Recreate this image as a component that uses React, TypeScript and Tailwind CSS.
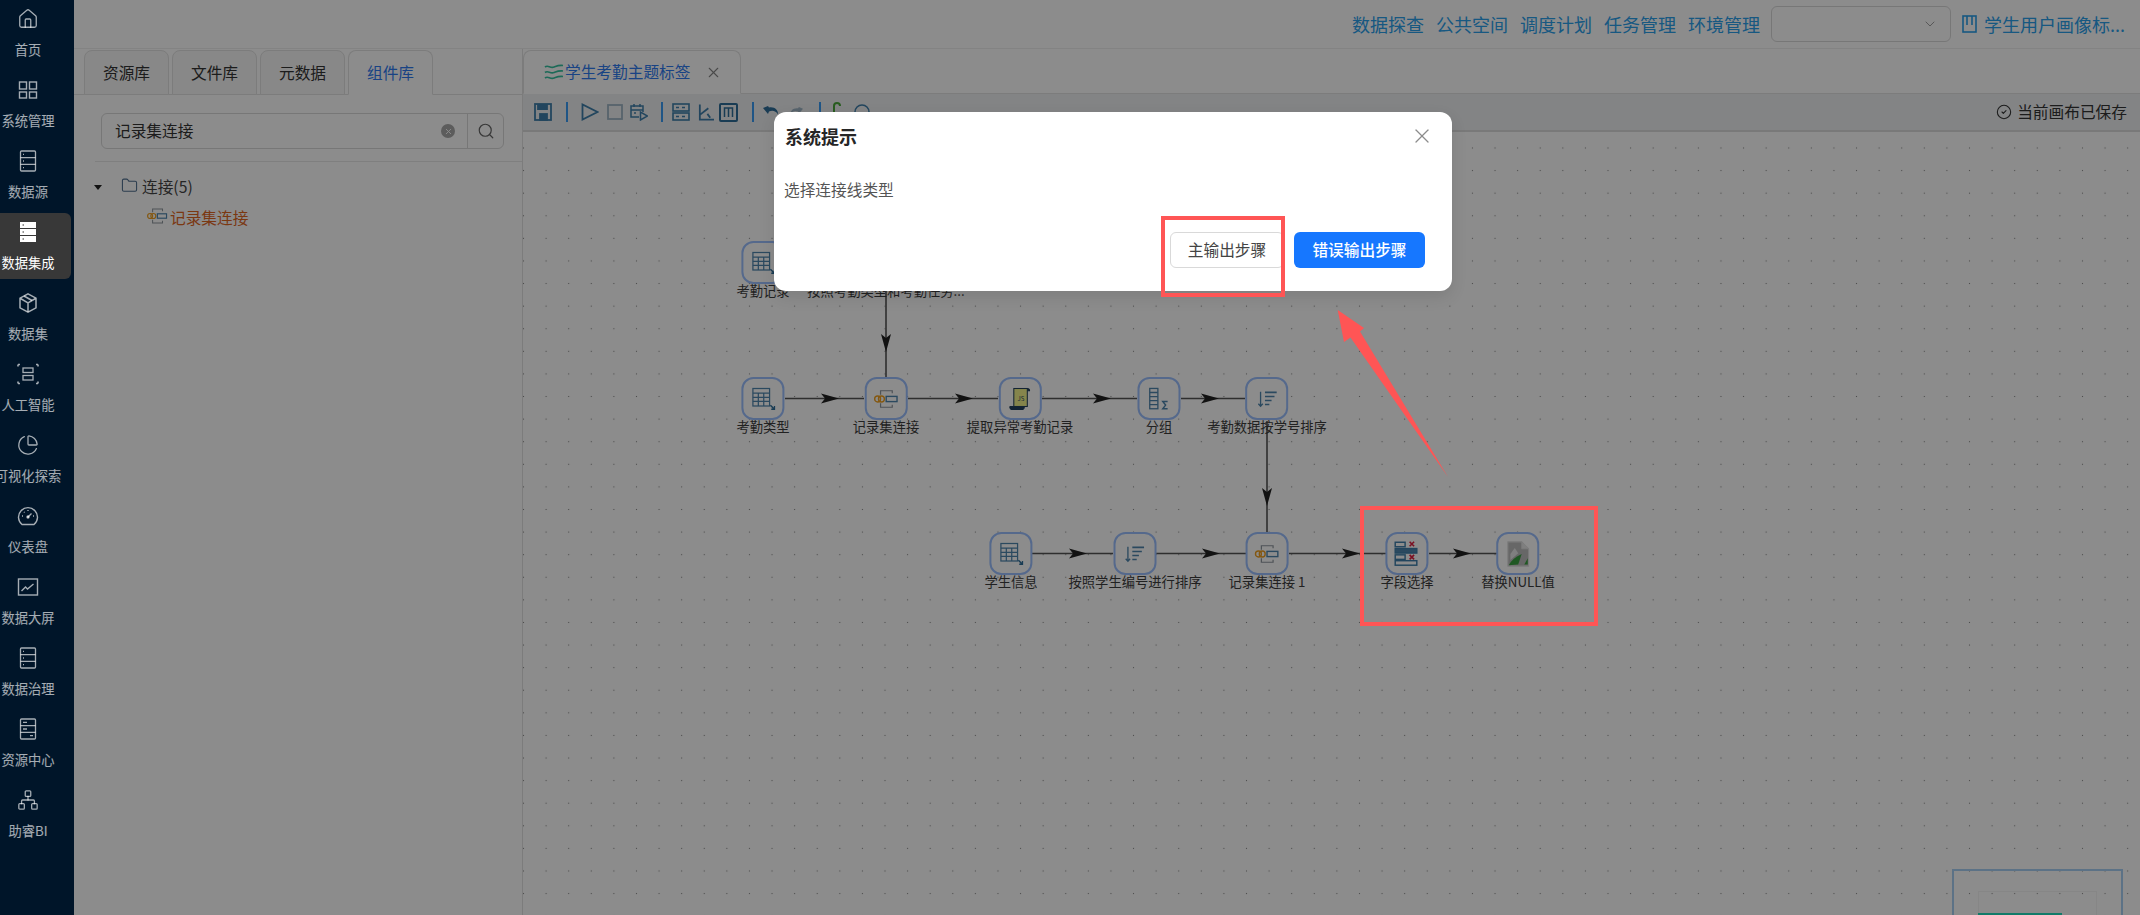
import { ChartPie, ChevronDown, CircleCheck, Folder, House, Network, Search, X } from "lucide-react";
import type { ReactNode } from "react";

const font = "font-['Noto_Sans_CJK_SC','Liberation_Sans',sans-serif]";

function ServerOutline({ thick }: { thick?: boolean }) {
  return (
    <svg width="22" height="22" viewBox="0 0 22 22" fill="none" stroke="currentColor" strokeWidth="1.3">
      <rect x="3.5" y="1" width="15" height="20" rx="1" />
      <path d="M3.5 7.6h15M3.5 14.3h15" />
      {thick ? (
        <path d="M6 4.3h4M6 11h4M13 17.6h3" />
      ) : (
        <path d="M6 4.3h1M6 11h1M6 17.6h1" />
      )}
    </svg>
  );
}

function GridIcon() {
  return (
    <svg width="22" height="22" viewBox="0 0 22 22" fill="none" stroke="currentColor" strokeWidth="1.4">
      <rect x="2.5" y="3" width="7" height="7" />
      <rect x="12.5" y="3" width="7" height="7" />
      <rect x="2.5" y="13" width="7" height="6" />
      <rect x="12.5" y="13" width="7" height="6" />
    </svg>
  );
}

function ServerSolid() {
  return (
    <svg width="22" height="22" viewBox="0 0 22 22">
      <rect x="3" y="1" width="16" height="6" fill="#fff" />
      <rect x="3" y="8" width="16" height="6" fill="#fff" />
      <rect x="3" y="15" width="16" height="6" fill="#fff" />
      <path d="M5.500 4h1.500M5.500 11h1.500M5.500 18h1.500" stroke="#333" strokeWidth="1.2" />
    </svg>
  );
}

function CubeIcon() {
  return (
    <svg width="22" height="22" viewBox="0 0 22 22" fill="none" stroke="currentColor" strokeWidth="1.5">
      <path d="M11 1.800l8 4.400v9.600l-8 4.400-8-4.400V6.200z" />
      <path d="M3.500 6.500l7.500 4.300 7.500-4.300M11 10.800v9" />
      <path d="M7 4l8 4.500" />
    </svg>
  );
}

function ScanIcon() {
  return (
    <svg width="22" height="22" viewBox="0 0 22 22" fill="none" stroke="currentColor" strokeWidth="1.3">
      <rect x="6" y="5" width="10" height="4.500" />
      <rect x="6" y="12.500" width="10" height="4.500" />
      <path d="M1 1.500h2M1 1.500v2M21 1.500h-2M21 1.500v2M1 20.500h2M1 20.500v-2M21 20.500h-2M21 20.500v-2" strokeWidth="1.6" />
    </svg>
  );
}

function GaugeIcon() {
  return (
    <svg width="22" height="22" viewBox="0 0 22 22" fill="none" stroke="currentColor" strokeWidth="1.4">
      <path d="M5 19.500a9.500 9.500 0 1 1 12 0z" />
      <path d="M11 12l3.500-3.500M5 11h1M16 11h1M11 5v1M7 7l.6.6" />
      <circle cx="11" cy="12" r="1" fill="currentColor" />
    </svg>
  );
}

function ScreenIcon() {
  return (
    <svg width="22" height="22" viewBox="0 0 22 22" fill="none" stroke="currentColor" strokeWidth="1.4">
      <rect x="1.500" y="3" width="19" height="16" />
      <path d="M4.500 15l4-4 2 2 6-5" />
    </svg>
  );
}

const navItems: { label: string; icon: ReactNode; active?: boolean }[] = [
  { label: "首页", icon: <House size={22} strokeWidth={1.4} /> },
  { label: "系统管理", icon: <GridIcon /> },
  { label: "数据源", icon: <ServerOutline /> },
  { label: "数据集成", icon: <ServerSolid />, active: true },
  { label: "数据集", icon: <CubeIcon /> },
  { label: "人工智能", icon: <ScanIcon /> },
  { label: "可视化探索", icon: <ChartPie size={22} strokeWidth={1.4} /> },
  { label: "仪表盘", icon: <GaugeIcon /> },
  { label: "数据大屏", icon: <ScreenIcon /> },
  { label: "数据治理", icon: <ServerOutline /> },
  { label: "资源中心", icon: <ServerOutline thick /> },
  { label: "助睿BI", icon: <Network size={22} strokeWidth={1.4} /> },
];

function Sidebar() {
  return (
    <nav className="relative z-30 flex h-full w-[74px] shrink-0 flex-col overflow-hidden bg-[#001529]">
      {navItems.map((item) => (
        <div className="h-[71px] w-[71px] shrink-0" key={item.label}>
          <div
            className={`flex h-[66px] w-[71px] flex-col rounded-r-md pt-[8px] ${
              item.active ? "bg-[#383838] text-white" : "text-white/65"
            }`}
          >
            <div className="flex h-[22px] w-[56px] justify-center">{item.icon}</div>
            <div className="mt-[10px] flex w-[56px] justify-center whitespace-nowrap text-[13.3px] leading-[20px]">
              {item.label}
            </div>
          </div>
        </div>
      ))}
    </nav>
  );
}

const headerLinks = ["数据探查", "公共空间", "调度计划", "任务管理", "环境管理"];

function Header() {
  return (
    <header className="flex h-[49px] shrink-0 items-center justify-end border-b border-[#eeeeee] pr-[15px] text-[18px] text-[#2aa0ec]">
      <div className="flex gap-[12px]">
        {headerLinks.map((link) => (
          <span key={link}>{link}</span>
        ))}
      </div>
      <div className="ml-[11px] flex h-[36px] w-[180px] items-center justify-end rounded-md border border-[#d9d9d9] pr-[12px] text-[#a0a0a0]">
        <ChevronDown size={16} strokeWidth={1.5} />
      </div>
      <svg className="ml-[11px]" width="15" height="18" viewBox="0 0 15 18" fill="none" stroke="currentColor" strokeWidth="1.6">
        <rect x="1" y="1" width="13" height="16" />
        <path d="M5 1v9M10 1v9" />
      </svg>
      <span className="ml-[7px] whitespace-nowrap">学生用户画像标...</span>
    </header>
  );
}

const libTabs = ["资源库", "文件库", "元数据", "组件库"];

function JoinIcon({ size = 26 }: { size?: number }) {
  return (
    <svg width={size} height={size} viewBox="0 0 30 30" fill="none">
      <path d="M9 10V5.500h13.500v3M9 20v4.500h13.500v-3" stroke="#8f979e" strokeWidth="1.4" />
      <circle cx="5.600" cy="15" r="3.400" stroke="#f0a020" strokeWidth="1.6" />
      <circle cx="10" cy="15" r="3.400" stroke="#f0a020" strokeWidth="1.6" />
      <rect x="15.500" y="12" width="12.500" height="6" stroke="#4f86ae" strokeWidth="1.6" />
    </svg>
  );
}

function LibraryPanel() {
  return (
    <aside className="flex h-full w-[449px] shrink-0 flex-col border-r border-[#e2e2e2]">
      <div className="flex h-[46px] shrink-0 items-end gap-[3px] border-b border-[#e2e2e2] pl-[10px] pt-px">
        {libTabs.map((tab, i) => (
          <div
            className={`-mb-px flex h-[45px] w-[85px] items-center justify-center rounded-t-lg border border-[#e2e2e2] text-[15.7px] ${
              i === 3 ? "border-b-white bg-white text-[#2f7bf0]" : "bg-[#f7f7f7] text-[#333]"
            }`}
            key={tab}
          >
            {tab}
          </div>
        ))}
      </div>
      <div className="ml-[27px] mt-[18px] flex h-[36px] w-[403px] items-center rounded-md border border-[#d9d9d9]">
        <span className="ml-[13px] flex-1 text-[15.7px] text-[#333]">记录集连接</span>
        <span className="mr-[12px] flex size-[14px] items-center justify-center rounded-full bg-[#a8a8a8] text-white">
          <X size={9} strokeWidth={2.5} />
        </span>
        <span className="flex h-full w-[36px] items-center justify-center border-l border-[#d9d9d9] text-[#666]">
          <Search size={18} strokeWidth={1.6} />
        </span>
      </div>
      <div className="ml-[21px] mt-[12px] border-t border-[#e8e8e8]" />
      <div className="mt-[13px] flex h-[24px] items-center text-[15.7px] text-[#444]">
        <span className="ml-[20px] h-0 w-0 border-x-[4.5px] border-t-[5px] border-x-transparent border-t-[#222]" />
        <Folder className="ml-[19px] -translate-y-[2px]" size={17} strokeWidth={1.5} color="#4f6f8f" />
        <span className="ml-[4px]">连接(5)</span>
      </div>
      <div className="mt-[7px] flex h-[24px] items-center">
        <span className="ml-[72px] flex -translate-y-[2px]">
          <JoinIcon size={22} />
        </span>
        <span className="ml-[2px] text-[15.7px] text-[#e0661f]">记录集连接</span>
      </div>
    </aside>
  );
}

function TableIcon() {
  return (
    <svg width="25" height="25" viewBox="0 0 30 30" fill="none" stroke="#4f86ae" strokeWidth="1.5">
      <rect x="3" y="3" width="20" height="21" />
      <path d="M3 8.500h20M3 13.500h20M3 18.500h20M9.500 8.500v15.500M16 8.500v15.500" />
      <path d="M24 23l4.500 4.500M29 24v4h-4" stroke="#2f6d99" strokeWidth="1.8" />
    </svg>
  );
}

function SortIcon() {
  return (
    <svg width="22" height="22" viewBox="0 0 30 30" fill="none" stroke="#4f86ae" strokeWidth="1.8">
      <path d="M6 5v20M3 21.500l3 3.500 3-3.500" />
      <path d="M12 6h16M12 11.500h13M12 17h9M12 22.500h6" strokeWidth="2.200" />
    </svg>
  );
}

function ScriptIcon() {
  return (
    <svg width="24" height="26" viewBox="0 0 32 34" fill="none" stroke="#23415e" strokeWidth="1.4">
      <path d="M8 27H3a3 3 0 0 0 2 4h15a4 4 0 0 0 2-4z" fill="#23415e" />
      <path d="M26 3a3 3 0 0 1 3 3h-3z" fill="#23415e" />
      <rect x="8" y="3" width="18" height="24" fill="#f2f28a" />
      <text x="13" y="19" fontSize="8" fill="#23415e" stroke="none">JS</text>
    </svg>
  );
}

function GroupIcon() {
  return (
    <svg width="26" height="26" viewBox="0 0 32 32" fill="none" stroke="#4f86ae" strokeWidth="1.6">
      <rect x="4" y="3" width="10" height="25" />
      <path d="M4 8h10M4 13h10M4 18h10M4 23h10" />
      <path d="M26 19h-6l3.500 4.500L20 28h6" strokeWidth="1.8" />
    </svg>
  );
}

function FieldIcon() {
  return (
    <svg width="27" height="27" viewBox="0 0 30 30" fill="none" stroke="#3f7fab" strokeWidth="1.6">
      <rect x="2" y="2.500" width="11" height="5" />
      <rect x="2" y="9.500" width="24" height="5" fill="#4f86ae" />
      <rect x="2" y="16.500" width="11" height="5" />
      <rect x="2" y="23" width="24" height="5" />
      <path d="M18 2l5 5M23 2l-5 5M18 16.500l5 5M23 16.500l-5 5" stroke="#e02040" strokeWidth="1.8" />
    </svg>
  );
}

function BrokenImageIcon() {
  return (
    <svg width="26" height="28" viewBox="0 0 30 32" fill="none">
      <path d="M3 2h16l8 8v20H3z" fill="#bcbcbc" stroke="#e0e0e0" strokeWidth="1.2" />
      <path d="M19 2v8h8" fill="#e8e8e8" stroke="#e0e0e0" />
      <path d="M6 16l5-7 4 6-9 8z" fill="#e8e8e8" />
      <path d="M4 29c3-6 8-10 15-13l-4 12z" fill="#3aa040" />
      <path d="M22 28l4-7v7z" fill="#3aa040" />
    </svg>
  );
}

const nodes: { cx: number; cy: number; label: string; icon: ReactNode }[] = [
  { cx: 763, cy: 261, label: "考勤记录", icon: <TableIcon /> },
  { cx: 886, cy: 261, label: "按照考勤类型和考勤任务...", icon: <SortIcon /> },
  { cx: 763, cy: 397.5, label: "考勤类型", icon: <TableIcon /> },
  { cx: 886, cy: 397.5, label: "记录集连接", icon: <JoinIcon /> },
  { cx: 1020, cy: 397.5, label: "提取异常考勤记录", icon: <ScriptIcon /> },
  { cx: 1159, cy: 397.5, label: "分组", icon: <GroupIcon /> },
  { cx: 1267, cy: 397.5, label: "考勤数据按学号排序", icon: <SortIcon /> },
  { cx: 1011, cy: 552.5, label: "学生信息", icon: <TableIcon /> },
  { cx: 1135, cy: 552.5, label: "按照学生编号进行排序", icon: <SortIcon /> },
  { cx: 1267, cy: 552.5, label: "记录集连接 1", icon: <JoinIcon /> },
  { cx: 1407, cy: 552.5, label: "字段选择", icon: <FieldIcon /> },
  { cx: 1518, cy: 552.5, label: "替换NULL值", icon: <BrokenImageIcon /> },
];

// x1, x2, y and where the arrow head starts, in page pixels
const hEdges = [
  [785, 864, 397.5, 821],
  [908, 998, 397.5, 955],
  [1042, 1137, 397.5, 1093],
  [1181, 1245, 397.5, 1201],
  [1032, 1113, 552.5, 1069],
  [1156, 1246, 552.5, 1202],
  [1289, 1386, 552.5, 1342],
  [1429, 1497, 552.5, 1453],
];
const vEdges = [
  [886, 283, 377, 333],
  [1267, 420, 531, 487],
];

function Edges() {
  return (
    <svg className="absolute inset-0" width="1617" height="784" viewBox="523 131 1617 784" fill="none">
      {hEdges.map(([x1, x2, y, a]) => (
        <g key={`${x1}-${y}`}>
          <path d={`M${x1} ${y}H${x2}`} stroke="#555" strokeWidth="1.6" />
          <path d={`M${a} ${y - 5}L${a + 18} ${y}L${a} ${y + 5}L${a + 4} ${y}z`} fill="#222" />
        </g>
      ))}
      {vEdges.map(([x, y1, y2, a]) => (
        <g key={`${x}-${y1}`}>
          <path d={`M${x} ${y1}V${y2}`} stroke="#555" strokeWidth="1.6" />
          <path d={`M${x - 5} ${a}L${x} ${a + 18}L${x + 5} ${a}L${x} ${a + 4}z`} fill="#222" />
        </g>
      ))}
    </svg>
  );
}

function Canvas() {
  return (
    <div className="relative flex-1 overflow-hidden bg-[radial-gradient(circle,#8a8a8a_0.6px,transparent_1px)] bg-size-[22.6px_22.6px] bg-position-[-10.8px_4.7px]">
      <Edges />
      {nodes.map((node) => (
        <div
          className="absolute flex -translate-x-1/2 flex-col items-center"
          key={`${node.label}-${node.cx}`}
          style={{ left: node.cx - 523, top: node.cy - 131 - 21.5 }}
        >
          <div className="flex size-[43px] items-center justify-center rounded-xl border-2 border-[#9cc0ff] bg-white">
            {node.icon}
          </div>
          <span className="-mt-[2px] whitespace-nowrap text-[13.3px] leading-[17px] text-[#3d3d3d]">{node.label}</span>
        </div>
      ))}
      <div className="absolute left-[1429px] top-[737px] h-[60px] w-[171px] border-2 border-[#a8d0f5]">
        <div className="ml-[24px] mt-[20px] h-[40px] w-[119px] border border-[#f4f4f4]">
          <div className="ml-[-1px] mt-[21px] h-[20px] w-[84px] border-2 border-[#23e0c0]" />
        </div>
      </div>
    </div>
  );
}

function ToolbarSep({ className }: { className: string }) {
  return <span className={`h-[20px] w-[2px] bg-[#3a9cf5] ${className}`} />;
}

function Toolbar() {
  return (
    <div className="flex h-[38px] shrink-0 items-center border-b-2 border-[#dddddd] bg-[#eef0f2] pl-[11px] pr-[13px]">
      <svg width="18" height="18" viewBox="0 0 18 18" fill="none" stroke="#3f7fab" strokeWidth="1.8">
        <rect x="1" y="1" width="16" height="16" />
        <path d="M4 1v5h9V1" fill="#3f7fab" />
        <rect x="6" y="11" width="7" height="6" fill="#3f7fab" />
      </svg>
      <ToolbarSep className="ml-[14px] mr-[13px]" />
      <svg width="18" height="18" viewBox="0 0 18 18" fill="none" stroke="#3f7fab" strokeWidth="1.8">
        <path d="M1.500 1.500v15l15-7.500z" />
      </svg>
      <svg className="ml-[8px]" width="16" height="16" viewBox="0 0 16 16" fill="none" stroke="#9fb5c5" strokeWidth="1.8">
        <rect x="1" y="1" width="14" height="14" />
      </svg>
      <svg className="ml-[7px]" width="18" height="18" viewBox="0 0 18 18" fill="none" stroke="#3f7fab" strokeWidth="1.5">
        <path d="M9 14H1V3h12v6M1 7h12M4 1v3M10 1v3M4 10h2" />
        <path d="M10.500 9v8l7-4z" />
      </svg>
      <ToolbarSep className="ml-[13px] mr-[9px]" />
      <svg width="18" height="18" viewBox="0 0 18 18" fill="none" stroke="#3f7fab" strokeWidth="1.6">
        <rect x="1" y="1" width="16" height="7" />
        <rect x="1" y="10" width="16" height="7" />
        <path d="M4 4.500h3M10 4.500h3M4 13.500h3M10 13.500h3" />
      </svg>
      <svg className="ml-[7px]" width="17" height="18" viewBox="0 0 18 18" fill="none" stroke="#3f7fab" strokeWidth="1.9">
        <path d="M3 1v16h15M3 12l9-7M11 11l3 4" />
      </svg>
      <svg className="ml-[5px]" width="19" height="19" viewBox="0 0 19 19" fill="none" stroke="#2f6d99" strokeWidth="2">
        <rect x="1" y="1" width="17" height="17" rx="1" />
        <path d="M5.500 14V5h8v9M9.500 5v9" strokeWidth="1.5" />
      </svg>
      <ToolbarSep className="ml-[14px] mr-[9px]" />
      <svg width="17" height="14" viewBox="0 0 17 14" fill="#2f6d99">
        <path d="M0 3l5 6 1-2.500c3-1.500 7-1 9 3 .3-4-3-8-9-7L5 1z" />
      </svg>
      <svg className="ml-[9px]" width="14" height="14" viewBox="0 0 17 14" fill="#9fb5c5">
        <path d="M17 3l-5 6-1-2.500c-3-1.500-7-1-9 3-.3-4 3-8 9-7L12 1z" />
      </svg>
      <ToolbarSep className="ml-[16px] mr-[11px]" />
      <svg width="9" height="20" viewBox="0 0 9 20" fill="none" stroke="#4aa83a" strokeWidth="2">
        <path d="M8 4a3 3 0 0 0-6 0v12" />
      </svg>
      <svg className="ml-[13px]" width="16" height="16" viewBox="0 0 16 16" fill="none" stroke="#3f7fab" strokeWidth="1.5">
        <circle cx="8" cy="8" r="7" />
      </svg>
      <div className="ml-auto flex items-center gap-[5px] text-[15.7px] text-[#333]">
        <CircleCheck size={16} strokeWidth={1.6} />
        当前画布已保存
      </div>
    </div>
  );
}

function Editor() {
  return (
    <section className="flex min-w-0 flex-1 flex-col">
      <div className="flex h-[45px] shrink-0 items-end border-b border-[#e2e2e2] pt-px">
        <div className="-mb-px flex h-[44px] w-[218px] items-center rounded-t-lg border border-[#e2e2e2] border-b-white bg-white pl-[20px]">
          <svg width="20" height="17" viewBox="0 0 20 17" fill="none" stroke="#35c2a0" strokeWidth="1.7">
            <path d="M1 3c3-2.500 5 1.500 9 0s5-2 9-1.500M1 8.500c3-2.500 5 1.500 9 0s5-2 9-1.500M1 14c3-2.500 5 1.500 9 0s5-2 9-1.500" />
          </svg>
          <span className="ml-[1px] whitespace-nowrap text-[15.7px] text-[#2f7bf0]">学生考勤主题标签</span>
          <X className="ml-[14px]" size={17} strokeWidth={1.5} color="#888" />
        </div>
      </div>
      <Toolbar />
      <Canvas />
    </section>
  );
}

function Dialog() {
  return (
    <div className="absolute left-[774px] top-[112px] z-20 flex h-[179px] w-[678px] flex-col rounded-xl bg-white pt-[11px] shadow-[0_6px_16px_rgba(0,0,0,0.1)]">
      <div className="flex h-[26px] items-center justify-between pl-[11px] pr-[18px]">
        <span className="text-[18px] font-bold text-[#262626]">系统提示</span>
        <X size={24} strokeWidth={1.3} color="#8c8c8c" />
      </div>
      <p className="ml-[10px] mt-[29px] h-[24px] text-[15.7px] leading-[24px] text-[#555]">选择连接线类型</p>
      <div className="mt-[30px] flex justify-end gap-[10px] pr-[27px]">
        <button className="h-[36px] w-[114px] rounded-md border border-[#d9d9d9] bg-white text-[15.7px] text-[#444]" type="button">
          主输出步骤
        </button>
        <button className="h-[36px] w-[131px] rounded-md bg-[#1677ff] text-[15.7px] font-medium text-white" type="button">
          错误输出步骤
        </button>
      </div>
    </div>
  );
}

export default function App() {
  return (
    <div className={`relative flex h-[915px] w-[2140px] overflow-hidden bg-white ${font}`}>
      <Sidebar />
      <main className="flex min-w-0 flex-1 flex-col">
        <Header />
        <div className="flex min-h-0 flex-1">
          <LibraryPanel />
          <Editor />
        </div>
      </main>
      <div className="absolute inset-0 z-10 bg-black/45" />
      <Dialog />
      {/* hand-drawn review marks on top of the screenshot */}
      <div className="absolute left-[1161px] top-[216px] z-20 h-[81px] w-[124px] border-4 border-[#ff5555]" />
      <div className="absolute left-[1360px] top-[506px] z-20 h-[120px] w-[238px] border-4 border-[#ff5555]" />
      <svg className="absolute left-[1330px] top-[305px] z-20" width="125" height="178" viewBox="1330 305 125 178">
        <path d="M1337.700 310L1364 328L1360 331.500L1448 477L1350.500 337.500L1344 342z" fill="#ff5555" />
      </svg>
    </div>
  );
}
